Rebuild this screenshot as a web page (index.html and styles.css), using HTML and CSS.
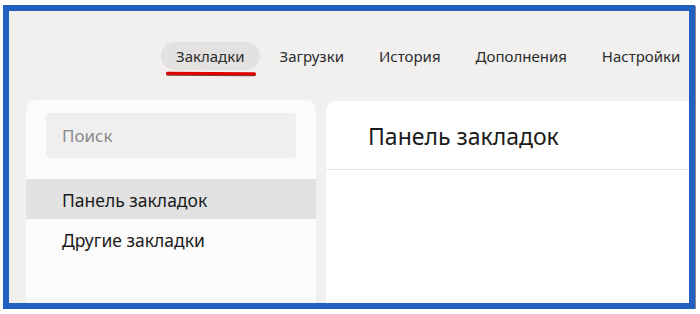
FILE: index.html
```html
<!DOCTYPE html>
<html>
  <head>
    <title>Закладки</title>
    <link rel="stylesheet" href="styles.css">
  </head>
  <body>
    <div class="frame">
      <div class="nav">
        <span class="tab active">Закладки</span>
        <span class="tab">Загрузки</span>
        <span class="tab">История</span>
        <span class="tab">Дополнения</span>
        <span class="tab">Настройки</span>
      </div>

      <div class="panels">
        <div class="sidebar">
          <div class="search">Поиск</div>
          <div class="folder selected">Панель закладок</div>
          <div class="folder">Другие закладки</div>
        </div>

        <div class="main">
          <div class="main-header">Панель закладок</div>
        </div>
      </div>
    </div>
  </body>
</html>
```

FILE: styles.css
```css
body {
  margin: 0;
  background: #fff;
  font-family: 'Noto Sans', 'Open Sans', sans-serif;
  color: #1b1b1b;
}

.frame {
  margin: 5px 0 0 3px;
  width: 680px;
  height: 292px;
  border: 6px solid #2261bf;
  background: #f1f0ee;
  box-shadow: 1px 1px 0 #8a8a8a;
  overflow: hidden;
}

.nav {
  display: flex;
  gap: 5px;
  padding: 31px 0 0 152px;
  white-space: nowrap;
}

.tab {
  position: relative;
  height: 28px;
  line-height: 28px;
  padding: 0 15px;
  border-radius: 14px;
  font-size: 15px;
  color: #2b2b2b;
}

.tab.active {
  background: #e3e2e0;
}

/* red marker drawn under the current tab */
.tab.active::after {
  content: '';
  position: absolute;
  left: 5px;
  right: 4px;
  top: 30px;
  height: 3px;
  border-radius: 2px;
  background: #e00000;
  box-shadow: 0 1px 0 #7a4040;
  transform: rotate(0.4deg);
}

.panels {
  display: flex;
  gap: 10px;
  margin: 30px 0 0 17px;
}

.sidebar {
  width: 290px;
  height: 230px;
  flex: none;
  background: #fbfbfb;
  border-radius: 10px 10px 0 0;
  padding-top: 13px;
}

.search {
  margin: 0 20px 21px 20px;
  height: 45px;
  line-height: 45px;
  padding-left: 16px;
  background: #efefef;
  border-radius: 4px;
  font-size: 17px;
  color: #8a8a8a;
}

.folder {
  height: 40px;
  line-height: 42px;
  padding-left: 36px;
  font-size: 17.5px;
}

.folder.selected {
  background: #e2e2e2;
}

.main {
  flex: 1;
  height: 230px;
  margin-top: 1px;
  background: #fff;
  border-radius: 10px 0 0 0;
}

.main-header {
  height: 68px;
  line-height: 70px;
  padding-left: 42px;
  font-size: 23px;
  border-bottom: 1px solid #e6e6e6;
}
```
